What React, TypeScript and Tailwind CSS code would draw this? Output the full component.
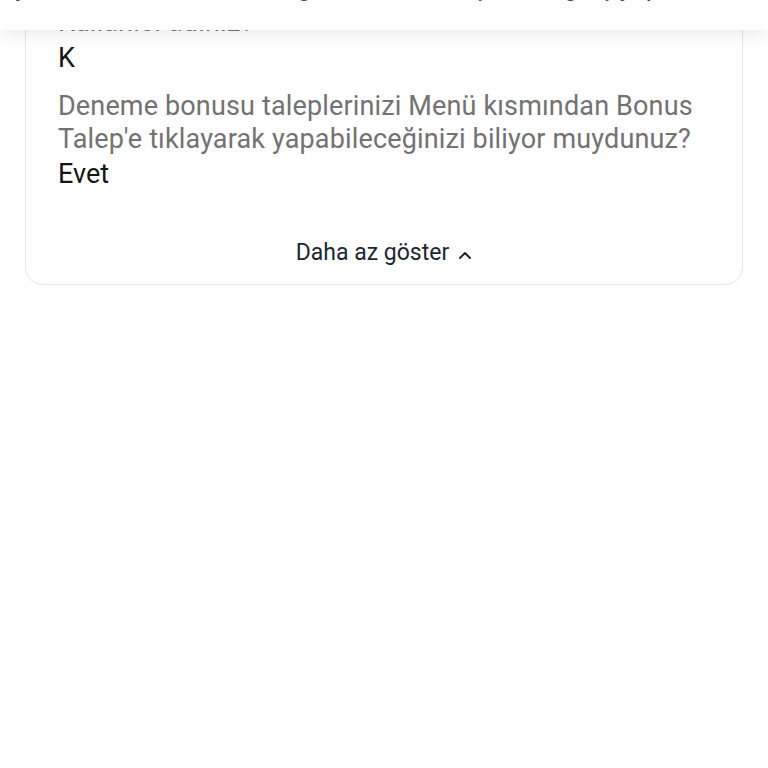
import React from "react";

export default function App() {
  return (
    <div className="flex min-h-[768px] w-[768px] flex-col overflow-hidden bg-white" style={{ fontFamily: "Roboto, 'Noto Sans', sans-serif" }}>
      {/* header */}
      <div className="relative z-10 h-[30px] w-full shrink-0 overflow-hidden bg-white shadow-[0_3px_18px_rgba(0,0,0,0.09)]">
        <div className="ml-[15px] mt-[-28px] whitespace-nowrap text-[26px] leading-[30px] text-[#1d4f8f]">
          yardıms kullanıcı adınızı girerek hesaba şifre ile giriş yapınız
        </div>
      </div>

      <div className="relative z-0 flex-1 overflow-hidden">
        <div className="mx-[25px] mt-[-50px] rounded-[18px] border border-[#e7e7e7] bg-white px-8 pb-[16px] pt-[25px]">
          <div className="text-[27px] leading-[33px] tracking-[0.15px] text-[#727272]">Kullanıcı adınız?</div>
          <div className="mt-[3px] text-[27px] leading-[33px] text-[#151515]">K</div>
          <div className="mt-[15px] text-[27px] leading-[33px] tracking-[0.15px] text-[#727272]">
            Deneme bonusu taleplerinizi Menü kısmından Bonus Talep'e tıklayarak yapabileceğinizi biliyor muydunuz?
          </div>
          <div className="mt-[2px] text-[27px] leading-[33px] text-[#151515]">Evet</div>
          <div className="mt-[47px] flex items-center justify-center gap-[9px] text-[23px] leading-[30px] text-[#1c2733]">
            <span>Daha az göster</span>
            <svg width="14" height="10" viewBox="0 0 14 10" className="mt-[4px]">
              <path d="M2 8 L7 3 L12 8" fill="none" stroke="#1c2733" strokeWidth="2" strokeLinecap="round" strokeLinejoin="round" />
            </svg>
          </div>
        </div>
      </div>
    </div>
  );
}
